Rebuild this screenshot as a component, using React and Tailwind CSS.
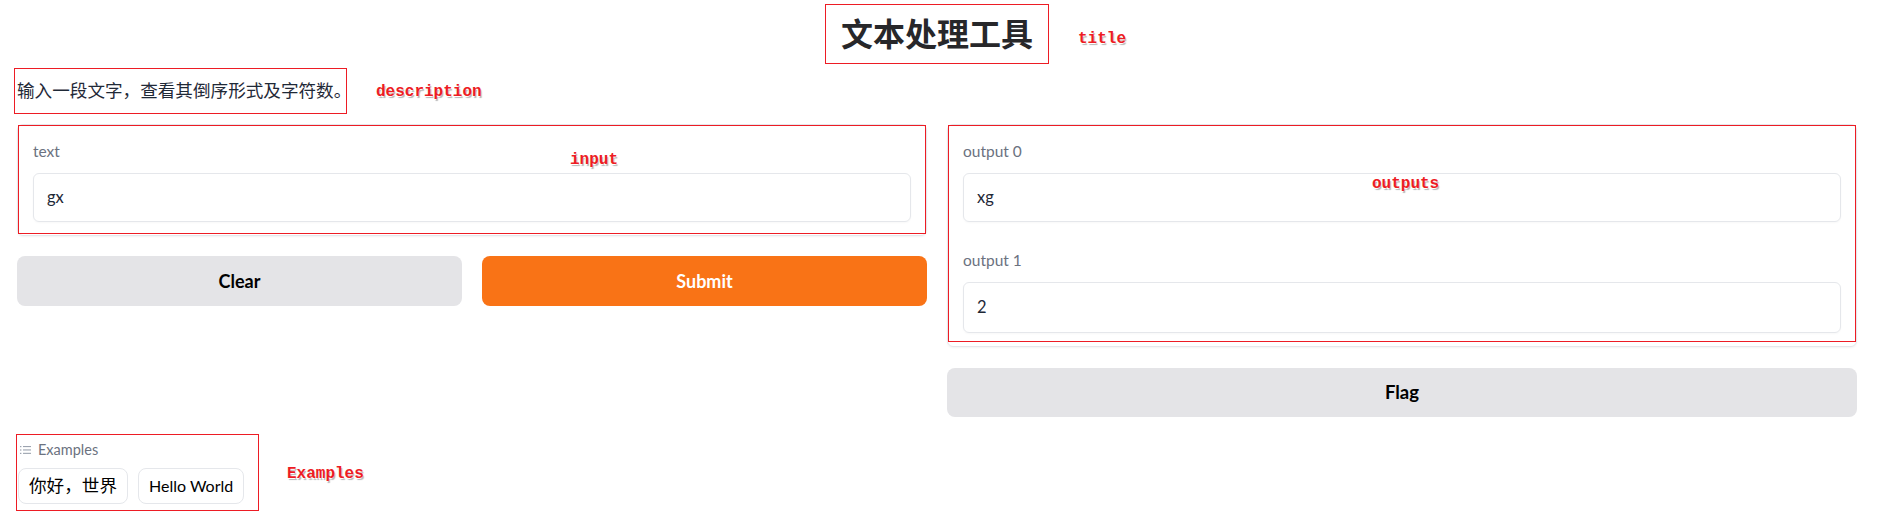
const Tag = ({ children, className }) => (
  <span
    className={`absolute font-['Liberation_Mono',monospace] text-[16px] leading-[20px] font-bold text-[#ed1c24] [text-shadow:-1px_1px_0_#fff,1px_2px_1px_#b5b5b5] ${className}`}
  >
    {children}
  </span>
);

const Field = ({ label, value, tall }) => (
  <div className="flex flex-col">
    <span className="text-[15.5px] leading-[22px] text-[#6b7280] mb-[11px]">{label}</span>
    <div
      className={`${tall ? "h-[51px]" : "h-[49px]"} border border-[#e5e7eb] rounded-[6px] px-[13px] flex items-center text-[16.5px] text-[#1f2937] shadow-[0_1px_2px_rgba(0,0,0,0.03)]`}
    >
      {value}
    </div>
  </div>
);

const ListIcon = () => (
  <svg width="12" height="10" viewBox="0 0 12 10" className="text-[#9ca3af]">
    <g fill="currentColor">
      <rect x="0" y="1" width="1.4" height="1.2" />
      <rect x="0" y="4.4" width="1.4" height="1.2" />
      <rect x="0" y="7.8" width="1.4" height="1.2" />
      <rect x="3" y="1" width="8" height="1.1" />
      <rect x="3" y="4.4" width="8" height="1.1" />
      <rect x="3" y="7.8" width="8" height="1.1" />
    </g>
  </svg>
);

export default function App() {
  return (
    <div className="relative min-h-screen bg-white pl-[17px] pr-[25px] pb-4 font-['Lato','Noto_Sans_CJK_SC',sans-serif] text-[#1f2937]">
      {/* title */}
      <div className="flex justify-center pt-[4px]">
        <h1 className="border border-[#ed1c24] px-[15px] py-[10px] text-[32px] leading-[38px] font-bold text-[#27272a]">
          文本处理工具
        </h1>
      </div>

      {/* description */}
      <div className="mt-[4px] -ml-[3px] w-[333px] h-[46px] border border-[#ed1c24] flex items-center pl-[2px]">
        <p className="text-[17.6px] whitespace-nowrap text-[#1f2937]">输入一段文字，查看其倒序形式及字符数。</p>
      </div>

      <div className="grid grid-cols-2 gap-[20px] mt-[10px] items-start">
        {/* left column */}
        <div className="flex flex-col gap-[20px]">
          <div className="relative border border-[#e5e7eb] rounded-[6px] px-[15px] pt-[15px] pb-[13px] shadow-[0_1px_2px_rgba(0,0,0,0.05)]">
            <Field label="text" value="gx" />
            <div className="absolute left-0 right-0 top-0 bottom-[1px] border border-[#ed1c24] pointer-events-none" />
          </div>
          <div className="grid grid-cols-2 gap-[20px]">
            <button className="h-[50px] rounded-[8px] bg-[#e4e4e7] text-[18px] font-bold text-black">Clear</button>
            <button className="h-[50px] rounded-[8px] bg-[#f97316] text-[18px] font-bold text-white">Submit</button>
          </div>
        </div>

        {/* right column */}
        <div className="flex flex-col gap-[21px]">
          <div className="relative border border-[#e5e7eb] rounded-[6px] px-[15px] pt-[15px] pb-[13px] flex flex-col gap-[27px] shadow-[0_1px_2px_rgba(0,0,0,0.05)]">
            <Field label="output 0" value="xg" />
            <Field label="output 1" value="2" tall />
            <div className="absolute left-0 right-0 top-0 bottom-[4px] border border-[#ed1c24] pointer-events-none" />
          </div>
          <button className="h-[49px] rounded-[8px] bg-[#e4e4e7] text-[18.5px] font-bold text-black">Flag</button>
        </div>
      </div>

      {/* examples */}
      <div className="mt-[17px] -ml-[1px] w-[243px] h-[77px] border border-[#ed1c24] pl-[1px] pt-[5px]">
        <div className="flex items-center gap-[6px] pl-[2px] text-[14.5px] leading-[20px] text-[#6b7280]">
          <ListIcon />
          <span>Examples</span>
        </div>
        <div className="flex gap-[10px] mt-[8px]">
          <button className="h-[36px] px-[10px] rounded-[8px] border border-[#e5e7eb] text-[17.6px] text-black">你好，世界</button>
          <button className="h-[36px] px-[10px] rounded-[8px] border border-[#e5e7eb] text-[16px] text-black">Hello World</button>
        </div>
      </div>

      <Tag className="left-[1078px] top-[29px]">title</Tag>
      <Tag className="left-[376px] top-[82px]">description</Tag>
      <Tag className="left-[570px] top-[150px]">input</Tag>
      <Tag className="left-[1372px] top-[174px]">outputs</Tag>
      <Tag className="left-[287px] top-[464px]">Examples</Tag>
    </div>
  );
}
